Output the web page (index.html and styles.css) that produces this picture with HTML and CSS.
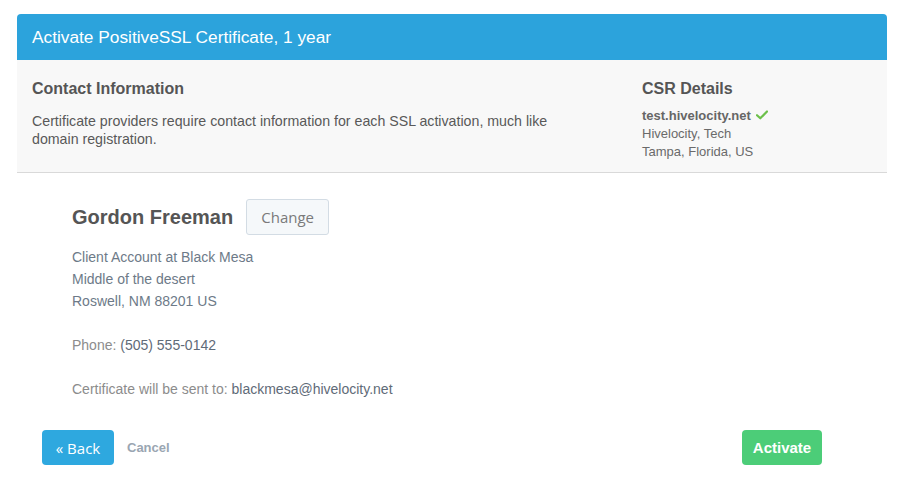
FILE: index.html
```html
<!DOCTYPE html>
<html lang="en">
<head>
    <meta charset="UTF-8">
    <meta name="viewport" content="width=device-width, initial-scale=1.0">
    <title>Activate PositiveSSL Certificate</title>
    <link rel="stylesheet" href="styles.css">
</head>
<body>
    <div class="modal">
        <div class="modal-header">Activate PositiveSSL Certificate, 1 year</div>

        <div class="info-panel">
            <div class="info-left">
                <h3>Contact Information</h3>
                <p>Certificate providers require contact information for each SSL activation, much like domain registration.</p>
            </div>
            <div class="info-right">
                <h3>CSR Details</h3>
                <div class="csr">
                    <strong>test.hivelocity.net</strong>
                    <svg class="check" width="12" height="10" viewBox="0 0 12 10"><path d="M1 5.2 L4.3 8.3 L11 1.5" fill="none" stroke="#6cc04a" stroke-width="2.2" stroke-linecap="round" stroke-linejoin="round"/></svg>
                    <br>Hivelocity, Tech
                    <br>Tampa, Florida, US
                </div>
            </div>
        </div>

        <div class="contact">
            <div class="contact-name">
                <h2>Gordon Freeman</h2>
                <button class="btn-change">Change</button>
            </div>
            <div class="address">
                Client Account at Black Mesa<br>
                Middle of the desert<br>
                Roswell, NM 88201 US
            </div>
            <div class="detail"><span class="label">Phone:</span> (505) 555-0142</div>
            <div class="detail"><span class="label">Certificate will be sent to:</span> blackmesa@hivelocity.net</div>
        </div>

        <div class="modal-footer">
            <div class="footer-left">
                <button class="btn-back">&laquo; Back</button>
                <a class="cancel" href="#">Cancel</a>
            </div>
            <button class="btn-activate">Activate</button>
        </div>
    </div>
</body>
</html>
```

FILE: styles.css
```css
body {
    font-family: "Liberation Sans", Arial, sans-serif;
    margin: 0;
    padding: 0;
    background-color: #ffffff;
    color: #555555;
}

.modal {
    width: 870px;
    margin: 14px 0 0 17px;
}

.modal-header {
    height: 46px;
    line-height: 46px;
    padding: 0 15px;
    background-color: #2ca3dc;
    color: #ffffff;
    font-size: 17.3px;
    border-radius: 4px 4px 0 0;
}

.info-panel {
    display: flex;
    background-color: #f8f8f8;
    border-bottom: 1px solid #d9d9d9;
    padding: 19px 15px 11px 15px;
}

.info-left {
    width: 530px;
    margin-right: 80px;
}

.info-panel h3 {
    margin: 0;
    font-size: 16px;
    line-height: 20px;
    color: #555555;
}

.info-left p {
    margin: 13px 0 0 0;
    font-size: 14.2px;
    line-height: 18px;
    color: #595959;
}

.csr {
    margin-top: 8px;
    font-size: 13px;
    line-height: 18px;
    color: #6a6a6a;
}

.csr strong {
    color: #666666;
}

.check {
    margin-left: 2px;
}

.contact {
    padding: 26px 0 0 55px;
}

.contact-name {
    display: flex;
    align-items: center;
}

.contact-name h2 {
    margin: 0 13px 0 0;
    font-size: 20px;
    color: #555555;
}

.btn-change {
    height: 36px;
    width: 83px;
    border: 1px solid #d3dce4;
    border-radius: 3px;
    background-color: #f5f8fa;
    color: #7a7a7a;
    font-family: "Open Sans", sans-serif;
    font-size: 15px;
    cursor: pointer;
}

.address {
    margin-top: 11px;
    font-size: 14px;
    line-height: 22px;
    color: #6d7a88;
}

.detail {
    margin-top: 22px;
    font-size: 14px;
    line-height: 22px;
    color: #5f6b78;
}

.detail .label {
    color: #8c8c8c;
}

.modal-footer {
    display: flex;
    justify-content: space-between;
    align-items: center;
    padding: 30px 65px 0 25px;
}

.footer-left {
    display: flex;
    align-items: center;
}

.btn-back {
    height: 35px;
    width: 72px;
    border: none;
    border-radius: 4px;
    background-color: #2ea8df;
    color: #ffffff;
    font-family: "Open Sans", sans-serif;
    font-weight: 500;
    font-size: 15px;
    cursor: pointer;
}

.cancel {
    margin-left: 13px;
    font-size: 13px;
    font-weight: bold;
    color: #9aa6b2;
    text-decoration: none;
}

.btn-activate {
    height: 35px;
    width: 80px;
    border: none;
    border-radius: 4px;
    background-color: #4ccd78;
    color: #ffffff;
    font-family: "Liberation Sans", Arial, sans-serif;
    font-weight: bold;
    font-size: 15px;
    cursor: pointer;
}
```
